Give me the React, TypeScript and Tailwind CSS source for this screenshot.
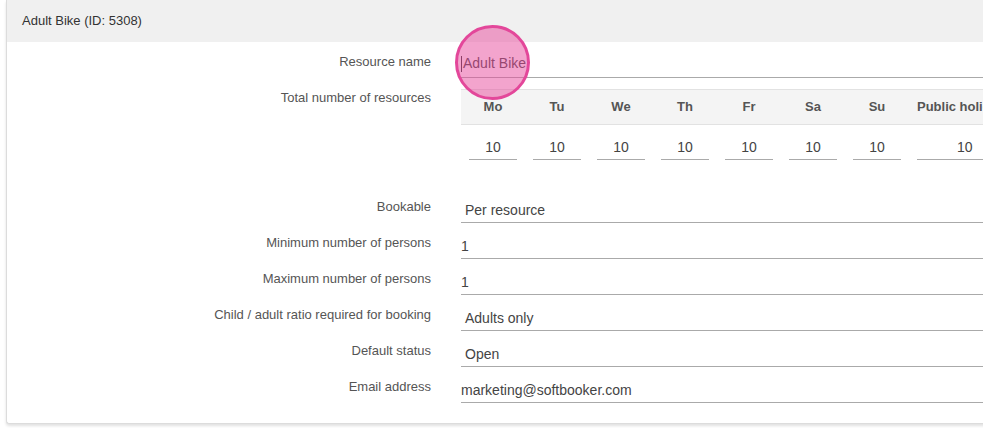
import React from 'react';

const days = ['Mo', 'Tu', 'We', 'Th', 'Fr', 'Sa', 'Su'];

function Row({ label, children }: { label: string; children: React.ReactNode }) {
  return (
    <div className="flex mb-[6px]">
      <div className="w-[424px] shrink-0 pt-[6px] text-right text-[13px] leading-[16px] text-[#555]">{label}</div>
      <div className="ml-[30px] flex-1">{children}</div>
    </div>
  );
}

function Field({ value, select = false }: { value: string; select?: boolean }) {
  return (
    <div
      className={`h-[30px] flex items-center pt-[6px] border-b border-[#aaa] text-[14px] text-[#444] ${select ? 'pl-[4px]' : ''}`}
    >
      {value}
    </div>
  );
}

export default function App() {
  return (
    <div
      className="relative w-[983px] h-[428px] overflow-hidden bg-white"
      style={{ fontFamily: '"Liberation Sans", Arial, sans-serif' }}
    >
      {/* Panel */}
      <div className="ml-[6px] w-[1200px] border-l border-b border-[#dcdcdc] rounded-bl-[3px] shadow-[0_2px_3px_rgba(0,0,0,0.12)] bg-white">
        <div className="h-[42px] flex items-center pl-[15px] bg-[#f0f0f0] text-[13px] text-[#333]">
          Adult Bike (ID: 5308)
        </div>

        <div className="pt-[6px] pb-[14px]">
          <Row label="Resource name">
            <div className="h-[30px] flex items-center pt-[2px] border-b border-[#aaa] text-[14px] text-[#444]">
              <span className="inline-block w-px h-[16px] bg-[#333] mr-px" />
              Adult Bike
            </div>
          </Row>

          <Row label="Total number of resources">
            <table className="mt-[5px] mb-[23px] border-collapse text-[13px]">
              <thead>
                <tr className="bg-[#f4f4f4] border-t border-b border-[#e2e2e2]">
                  {days.map((d) => (
                    <th key={d} className="w-16 py-[9px] px-2 font-bold leading-[16px] text-center text-[#555]">
                      {d}
                    </th>
                  ))}
                  <th className="py-[9px] px-2 font-bold leading-[16px] text-center text-[#555] whitespace-nowrap">
                    Public holidays
                  </th>
                </tr>
              </thead>
              <tbody>
                <tr>
                  {[...days, 'ph'].map((d) => (
                    <td key={d} className="px-2 pt-[5px] pb-[4px]">
                      <div className="h-[30px] flex items-center justify-center pt-[6px] border-b border-[#aaa] text-[14px] text-[#444]">
                        10
                      </div>
                    </td>
                  ))}
                </tr>
              </tbody>
            </table>
          </Row>

          <Row label="Bookable">
            <Field value="Per resource" select />
          </Row>
          <Row label="Minimum number of persons">
            <Field value="1" />
          </Row>
          <Row label="Maximum number of persons">
            <Field value="1" />
          </Row>
          <Row label="Child / adult ratio required for booking">
            <Field value="Adults only" select />
          </Row>
          <Row label="Default status">
            <Field value="Open" select />
          </Row>
          <Row label="Email address">
            <Field value="marketing@softbooker.com" />
          </Row>
        </div>
      </div>

      {/* Click indicator */}
      <div className="absolute left-[455px] top-[25px] w-[75px] h-[75px] rounded-full border-[3px] border-[#e3479a] bg-[#e84a9c]/50" />
    </div>
  );
}
